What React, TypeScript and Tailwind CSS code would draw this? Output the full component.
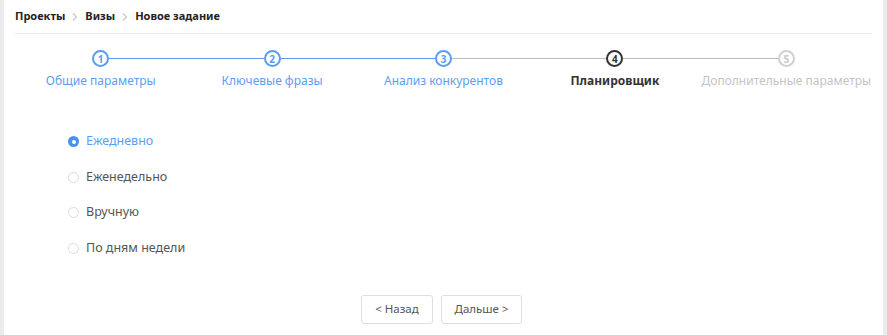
import { useState } from 'react';

const steps = [
  { n: 1, title: 'Общие параметры', state: 'done' },
  { n: 2, title: 'Ключевые фразы', state: 'done' },
  { n: 3, title: 'Анализ конкурентов', state: 'done' },
  { n: 4, title: 'Планировщик', state: 'current' },
  { n: 5, title: 'Дополнительные параметры', state: 'todo' },
];

const options = ['Ежедневно', 'Еженедельно', 'Вручную', 'По дням недели'];

function Chevron() {
  return (
    <svg width="8" height="10" viewBox="0 0 8 10" className="mx-[6px]">
      <path d="M2 1.5 L5.5 5 L2 8.5" fill="none" stroke="#c8c8c8" strokeWidth="1.2" />
    </svg>
  );
}

function Step({ n, title, state, idx }: { n: number; title: string; state: string; idx: number }) {
  const circle =
    state === 'done'
      ? 'border-[#5a9ef2] text-[#5a9ef2]'
      : state === 'current'
      ? 'border-[#333] text-[#333]'
      : 'border-[#d0d0d0] text-[#c8c8c8]';
  const label =
    state === 'done'
      ? 'text-[#5a9ef2]'
      : state === 'current'
      ? 'text-[#333] font-bold'
      : 'text-[#c4c4c4]';
  const leftLine = idx === 0 ? 'bg-transparent' : idx <= 2 ? 'bg-[#5a9ef2]' : 'bg-[#b8bcc4]';
  const rightLine = idx === 4 ? 'bg-transparent' : idx <= 1 ? 'bg-[#5a9ef2]' : 'bg-[#b8bcc4]';
  return (
    <div className="flex-1 flex flex-col items-center">
      <div className="flex items-center w-full h-[17px]">
        <div className={`flex-1 h-px ${leftLine}`} />
        <div
          className={`w-[17px] h-[17px] rounded-full border-2 flex items-center justify-center text-[10px] font-bold leading-none ${circle}`}
        >
          {n}
        </div>
        <div className={`flex-1 h-px ${rightLine}`} />
      </div>
      <div className={`mt-[5px] text-[12px] leading-[17px] whitespace-nowrap ${label}`}>{title}</div>
    </div>
  );
}

export default function App() {
  const [sel, setSel] = useState(0);
  return (
    <div className="h-[335px] w-[887px] flex bg-white" style={{ fontFamily: '"Noto Sans", "Open Sans", sans-serif' }}>
      <div className="w-[4px] bg-[#ebebeb]" />
      <div className="flex-1 flex flex-col px-[11px]">
        <div className="flex items-center h-[33px] text-[11px] font-bold text-[#222]">
          <span>Проекты</span>
          <Chevron />
          <span>Визы</span>
          <Chevron />
          <span>Новое задание</span>
        </div>
        <div className="h-px bg-[#ececec]" />
        <div className="flex mt-[16px]">
          {steps.map((s, i) => (
            <Step key={s.n} {...s} idx={i} />
          ))}
        </div>
        <div className="flex flex-col gap-[20.5px] mt-[45px] pl-[53px]">
          {options.map((o, i) => (
            <label key={o} className="flex items-center h-[15px] cursor-pointer" onClick={() => setSel(i)}>
              {sel === i ? (
                <span className="w-[11px] h-[11px] rounded-full bg-[#4a90f0] flex items-center justify-center">
                  <span className="w-[4px] h-[4px] rounded-full bg-white" />
                </span>
              ) : (
                <span className="w-[11px] h-[11px] rounded-full border border-[#dcdcdc] bg-white" />
              )}
              <span className={`ml-[7px] text-[12.5px] ${sel === i ? 'text-[#5a9ef2]' : 'text-[#555]'}`}>{o}</span>
            </label>
          ))}
        </div>
        <div className="flex justify-center gap-[8px] mt-[39px] pr-[4px]">
          <button className="h-[29px] w-[72px] border border-[#dedede] rounded-[3px] bg-white text-[11.5px] text-[#555]">
            &lt; Назад
          </button>
          <button className="h-[29px] w-[81px] border border-[#dedede] rounded-[3px] bg-white text-[11.5px] text-[#555]">
            Дальше &gt;
          </button>
        </div>
      </div>
      <div className="w-[4px] bg-[#ebebeb]" />
    </div>
  );
}
